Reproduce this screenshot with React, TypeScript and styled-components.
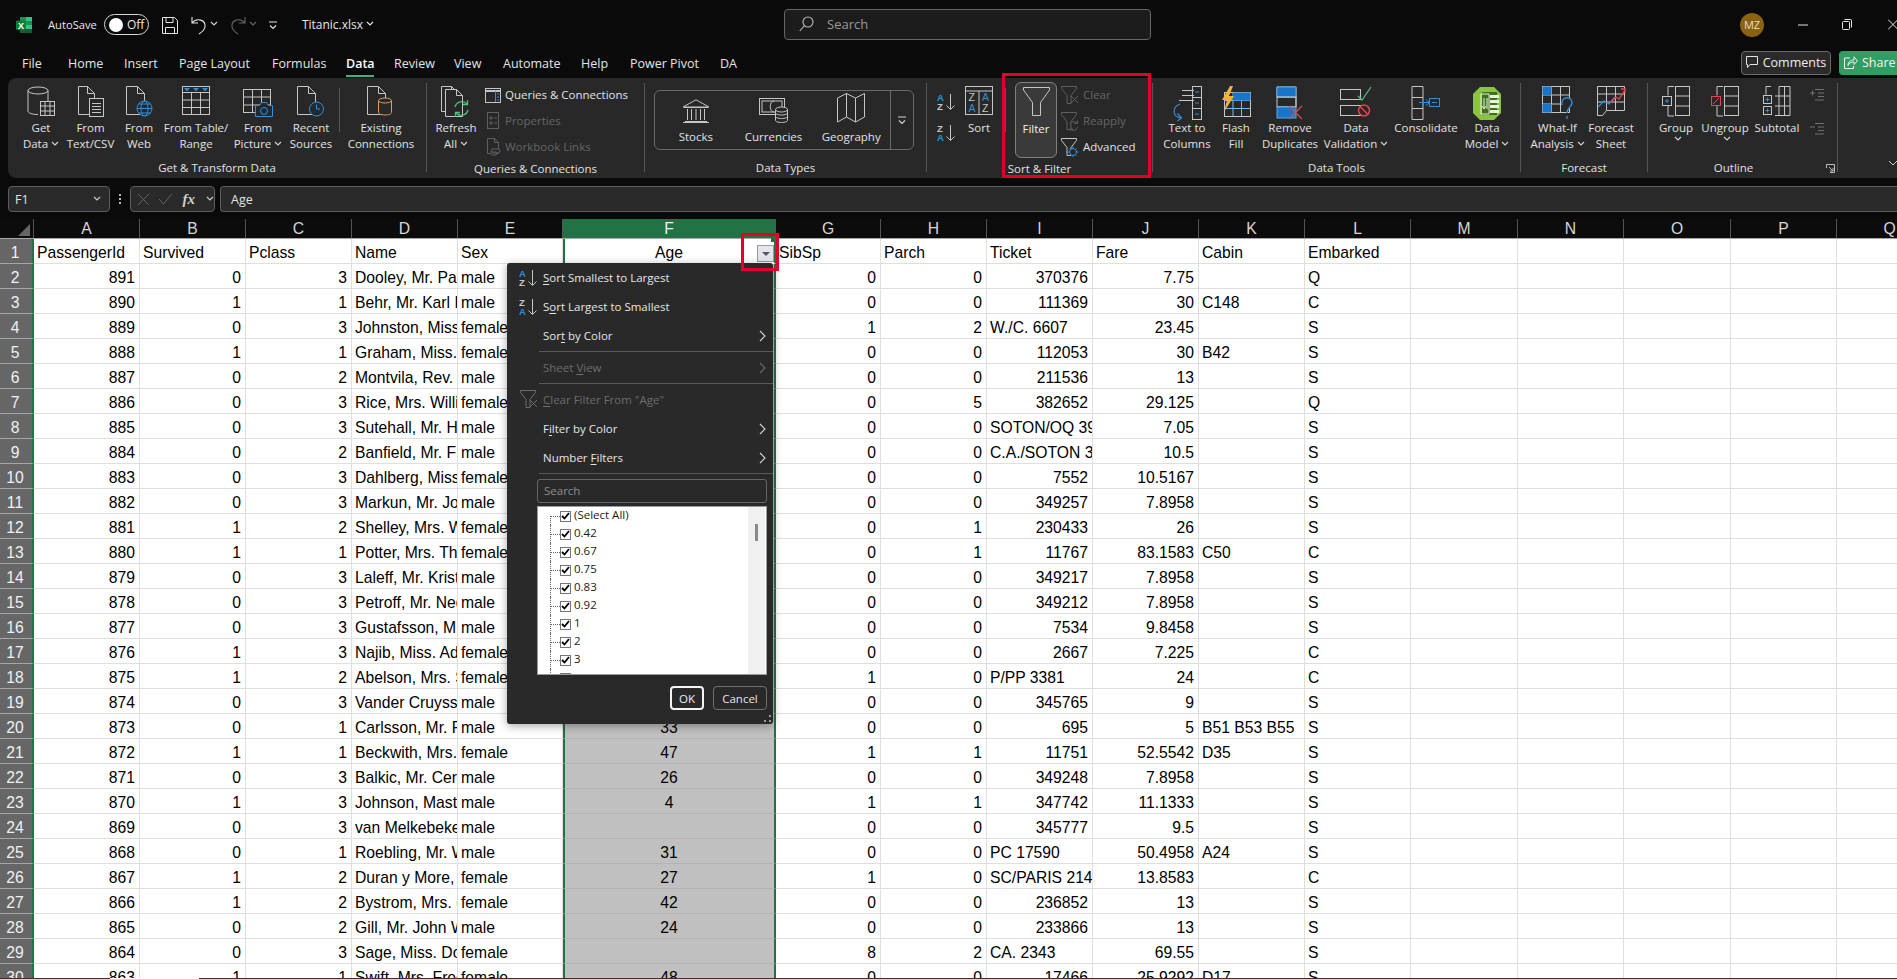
import React from "react";
import styled, { createGlobalStyle } from "styled-components";

const uiFont = `"Open Sans", "Noto Sans", sans-serif`;
const sheetFont = `"Liberation Sans", Arial, sans-serif`;
const LINE = "#c6c6c6";
const DIM = "#5f5f5f";
const BLUE = "#2f8fdf";
const PANEL = "#282828";

const GlobalStyle = createGlobalStyle`
    html, body {
        margin: 0;
        height: 979px;
        overflow: hidden;
        background: #0a0a0a;
    }
    * { box-sizing: border-box; }
`;

/* ---------- drawings ---------- */

function Ico({ w, h, stroke = LINE, children }: { w: number; h: number; stroke?: string; children?: React.ReactNode }) {
    return (
        <svg width={w} height={h} viewBox={`0 0 ${w} ${h}`} fill="none" stroke={stroke} strokeWidth="1" style={{ display: "block", flex: "none" }}>
            {children}
        </svg>
    );
}

const doc = (x: number, y: number, w: number, h: number, f = 7) =>
    `M${x} ${y}h${w - f}l${f} ${f}v${h - f}h${-w}z M${x + w - f} ${y}v${f}h${f}`;

const Chevron = ({ color = "#d0d0d0" }: { color?: string }) => (
    <svg width="8" height="5" viewBox="0 0 8 5" fill="none" stroke={color} strokeWidth="1.2" style={{ display: "inline-block", margin: "0 0 2px 3px" }}>
        <path d="M1 1l3 3 3-3" />
    </svg>
);

const GetDataIcon = () => (
    <Ico w={28} h={32}>
        <ellipse cx="11" cy="4.5" rx="10" ry="3.5" />
        <path d="M1 4.5V25c0 2 4 3.5 10 3.5M21 4.5V15" />
        <rect x="13.5" y="15.5" width="14" height="14" fill={PANEL} />
        <path d="M13.5 20h14M13.5 25h14M18 15.5v14M23 15.5v14" />
    </Ico>
);
const TextCsvIcon = () => (
    <Ico w={28} h={32}>
        <path d={doc(1.5, 0.5, 16, 28)} />
        <rect x="12.5" y="12.5" width="14" height="18" fill={PANEL} />
        <path d="M15 17.5h9M15 20.5h9M15 23.5h9M15 26.5h9" />
    </Ico>
);
const WebIcon = () => (
    <Ico w={28} h={32}>
        <path d={doc(1.5, 0.5, 18, 28)} />
        <g stroke={BLUE}>
            <circle cx="19.5" cy="22.5" r="7.5" fill={PANEL} />
            <ellipse cx="19.5" cy="22.5" rx="3.5" ry="7.5" />
            <path d="M12 22.5h15M13.5 18h12M13.5 27h12" />
        </g>
    </Ico>
);
const TableIcon = () => (
    <Ico w={28} h={30}>
        <rect x="0.5" y="0.5" width="27" height="28" />
        <path d="M.5 6.5h27M.5 14h27M.5 21.5h27M9.5 6.5v22M18.5 6.5v22" />
        <path d="M2 2h6l-3 3.5zM11 2h6l-3 3.5zM20 2h6l-3 3.5z" fill={BLUE} stroke="none" />
    </Ico>
);
const PictureIcon = () => (
    <Ico w={31} h={32}>
        <rect x="0.5" y="3.5" width="27" height="23" />
        <path d="M.5 11h27M.5 19h27M9.5 3.5v23M18.5 3.5v23" />
        <g stroke={BLUE}>
            <path d="M12.5 19.5h4l2-3h5l2 3h4v11h-17z" fill={PANEL} />
            <circle cx="21" cy="25" r="3.5" />
        </g>
    </Ico>
);
const RecentIcon = () => (
    <Ico w={28} h={32}>
        <path d={doc(0.5, 0.5, 18, 28)} />
        <g stroke={BLUE}>
            <circle cx="19.5" cy="23" r="7" fill={PANEL} />
            <path d="M19.5 18.5V23h3.5" />
        </g>
    </Ico>
);
const ExistingIcon = () => (
    <Ico w={28} h={32}>
        <path d={doc(0.5, 0.5, 18, 28)} />
        <g stroke="#e0a050">
            <path d="M11.5 14.5v12c0 1.5 3 2.5 6.5 2.5s6.5-1 6.5-2.5v-12" fill={PANEL} />
            <ellipse cx="18" cy="14.5" rx="6.5" ry="2.5" fill={PANEL} />
        </g>
    </Ico>
);
const RefreshIcon = () => (
    <Ico w={30} h={32}>
        <path d={doc(0.5, 0.5, 15, 25, 5)} />
        <path d={doc(4.5, 3.5, 17, 27, 6)} fill={PANEL} />
        <g stroke="#4cc27a" strokeWidth="1.3">
            <path d="M14 21a7 7 0 0 1 12-3" />
            <path d="M26.5 14v4.5H22" />
            <path d="M27 24a7 7 0 0 1-12 3" />
            <path d="M14.5 31v-4.5H19" />
        </g>
    </Ico>
);
const QueriesIcon = () => (
    <Ico w={16} h={15}>
        <rect x="0.5" y="0.5" width="15" height="14" />
        <path d="M.5 3h15" strokeWidth="2" />
        <path d="M10.5 3v11" stroke={BLUE} />
        <path d="M12 6h2M12 9h2M12 12h2" stroke={BLUE} />
    </Ico>
);
const PropertiesIcon = () => (
    <Ico w={16} h={18} stroke={DIM}>
        <rect x="2.5" y="0.5" width="11" height="16" />
        <path d="M5 5h2v2H5zM5 10h2v2H5zM9 6h3M9 11h3" />
    </Ico>
);
const LinksIcon = () => (
    <Ico w={16} h={18} stroke={DIM}>
        <path d={doc(2.5, 0.5, 11, 15, 4)} />
        <path d="M7 11h6a2 2 0 0 1 0 4H8a2 2 0 0 1 0-4M6 14h5a2 2 0 0 1 0 3H6" fill={PANEL} />
    </Ico>
);
const StocksIcon = () => (
    <Ico w={28} h={24}>
        <path d="M14 .8L1 8h26zM2 8.5h24M3 22.5h22M1 23.5h26M5.5 10v11M9.5 10v11M14 10v11M18.5 10v11M22.5 10v11" />
    </Ico>
);
const CurrencyIcon = () => (
    <Ico w={30} h={26}>
        <rect x="0.5" y="1.5" width="25" height="16" />
        <rect x="3" y="4" width="20" height="11" />
        <path d="M15 4c-5 0-5 11 0 11" />
        <g fill={PANEL}>
            <path d="M16.5 12.5v11c0 1 2.5 2 6 2s6-1 6-2v-11" />
            <ellipse cx="22.5" cy="12.5" rx="6" ry="2.5" />
            <path d="M16.5 16c0 1 2.5 2 6 2s6-1 6-2M16.5 19.5c0 1 2.5 2 6 2s6-1 6-2" fill="none" />
        </g>
    </Ico>
);
const MapIcon = () => (
    <Ico w={28} h={30}>
        <path d="M.5 5l9-4.5 9 4.5 9-4.5V24l-9 5-9-5-9 5zM9.5.5V24M18.5 5v24" />
    </Ico>
);
const AzIcon = ({ top, stroke = LINE }: { top: string; stroke?: string }) => {
    const blueFirst = top === "A";
    const letter = { fontFamily: sheetFont, fontSize: 9.5, fontWeight: 700, stroke: "none" } as const;
    return (
        <Ico w={19} h={18} stroke={stroke}>
            <text x="0" y="8" fill={blueFirst ? BLUE : stroke} style={letter}>{top}</text>
            <text x="0" y="17" fill={blueFirst ? stroke : BLUE} style={letter}>{top === "A" ? "Z" : "A"}</text>
            <path d="M13.5 1v15M9.5 12.5l4 4 4-4" />
        </Ico>
    );
};
const SortIcon = () => {
    const letter = { fontFamily: sheetFont, fontSize: 10.5, stroke: "none" } as const;
    return (
        <Ico w={29} h={30}>
            <rect x="0.5" y="0.5" width="27" height="28" />
            <path d="M.5 5h27M14 5v23.500" />
            <text x="3.500" y="15" fill={LINE} style={letter}>Z</text>
            <text x="3.500" y="26" fill={BLUE} style={letter}>A</text>
            <text x="17" y="15" fill={BLUE} style={letter}>A</text>
            <text x="17" y="26" fill={LINE} style={letter}>Z</text>
        </Ico>
    );
};
const FunnelIcon = () => (
    <Ico w={27} h={29}>
        <path d="M.5 .5h26v2.500L17.500 15.500V28.500h-8V15.500L.5 3z" />
    </Ico>
);
const SmallFunnel = ({ stroke, mark }: { stroke: string; mark: React.ReactNode }) => (
    <Ico w={18} h={19} stroke={stroke}>
        <path d="M.5 .5h15v2L10 9.500v8H6v-8L.5 2.500z" />
        {mark}
    </Ico>
);
const ClearMark = <path d="M10 10l7 7M17 10l-7 7" />;
const ReapplyMark = (
    <g fill={PANEL}>
        <path d="M9 13a4 4 0 0 1 7-2M16.500 8.500V11.500H13.500M16.500 15a4 4 0 0 1-7 2M9 19.500V17H12" />
    </g>
);
const GearMark = (
    <g stroke={BLUE} fill={PANEL}>
        <circle cx="12" cy="14" r="3.500" />
        <path d="M12 8.500v2M12 17.500v2M6.500 14h2M15.500 14h2M8.500 10.500l1.300 1.300M14.200 16.200l1.300 1.300M15.500 10.500l-1.300 1.300M9.800 16.200l-1.300 1.300" />
    </g>
);
const TextColumnsIcon = () => (
    <Ico w={30} h={36}>
        <path d="M10 4.500h12M10 9.500h12M7 14.500h15" />
        <rect x="20.500" y="0.500" width="9" height="33" />
        <path d="M20.500 11.500h9M20.500 22.500h9" />
        <path d="M23 6h4M23 17h4M23 28h4" stroke={BLUE} />
        <path d="M8 18c-8 3-8 13 1 14M5.500 27.500l4 4.500-4 3" stroke={BLUE} strokeWidth="1.200" />
    </Ico>
);
const FlashFillIcon = () => (
    <Ico w={30} h={32}>
        <rect x="3.500" y="6.500" width="26" height="24" />
        <path d="M3.500 14.500h26M3.500 22.500h26M12 6.500v24M20.500 6.500v24" stroke="#7fb7e8" />
        <path d="M12 6.500h17.500v8H12z" fill="#1a75c8" stroke="none" />
        <path d="M9 0L1 14h5L3 26l10-16H8l4-10z" fill="#f2b233" stroke="none" />
    </Ico>
);
const RemoveDupIcon = () => (
    <Ico w={28} h={34}>
        <path d="M1 11h19V1H1zM1 21h19v-10" />
        <rect x="1" y="1" width="19" height="10" fill="#1a75c8" stroke="#5aa9ea" />
        <rect x="1" y="11" width="19" height="10" fill="none" />
        <rect x="1" y="21" width="19" height="11" fill="#1a75c8" stroke="#5aa9ea" />
        <path d="M13 20l13 13M26 20L13 33" stroke="#e0484e" strokeWidth="1.200" />
    </Ico>
);
const ValidationIcon = () => (
    <Ico w={32} h={32}>
        <rect x="0.500" y="3.500" width="20" height="10" />
        <rect x="0.500" y="19.500" width="20" height="10" />
        <path d="M18 10l4 4 9-13" stroke="#4cc27a" strokeWidth="1.200" />
        <g stroke="#e0484e" strokeWidth="1.500">
            <circle cx="24" cy="24.500" r="5.500" fill={PANEL} />
            <path d="M20 20.500l8 8" />
        </g>
    </Ico>
);
const ConsolidateIcon = () => (
    <Ico w={30} h={34}>
        <path d="M1 .5h11v11H1zM1 11.500v11M12 11.500v11M1 22.500h11v11H1z" />
        <rect x="18.500" y="12.500" width="10" height="8" stroke={BLUE} fill={PANEL} />
        <path d="M21 16.500h5" stroke={BLUE} />
        <path d="M8 16.500h10M15 13.500l3.500 3-3.500 3" stroke={BLUE} />
    </Ico>
);
const DataModelIcon = () => (
    <svg width="30" height="35" viewBox="0 0 30 35" style={{ display: "block", flex: "none" }}>
        <path d="M8 1h14l7 7v19l-7 7H8l-7-7V8z" fill="#8bc53f" />
        <path d="M10 6h15v23H10z" fill="#3f6f22" />
        <path d="M9 8h8v20H9z" fill="none" stroke="#eaf5d8" />
        <path d="M18 9h9v3h-9zM18 14h9v3h-9zM18 19h9v3h-9zM18 24h9v3h-9z" fill="#eaf5d8" />
        <path d="M12 12v11M10 20l2 3 2-3M15 23V12" stroke="#eaf5d8" fill="none" />
    </svg>
);
const WhatIfIcon = () => (
    <Ico w={32} h={34}>
        <rect x="0.500" y="0.500" width="27" height="26" />
        <path d="M.5 9h27M.5 18h27M9.500 .5v26M18.500 .5v26" />
        <rect x="0.500" y="0.500" width="9" height="8.500" fill="#1a75c8" stroke="none" />
        <rect x="0.500" y="18" width="9" height="8.500" fill="#1a75c8" stroke="none" />
        <path d="M20 17c0-7 10-7 10 0 0 4-5 4-5 10" stroke={BLUE} strokeWidth="1.400" fill={PANEL} />
        <path d="M25 30v3" stroke={BLUE} strokeWidth="1.400" />
    </Ico>
);
const ForecastIcon = () => (
    <Ico w={29} h={30}>
        <path d="M.5 .5h27v24h-18l-4 5h-5zM.5 8h27M.5 16h27M9.500 .5v24M18.500 .5v24" />
        <path d="M1 21l6-6 5 3 6-7" stroke={BLUE} strokeWidth="1.300" />
        <path d="M14 16l5-5 3 2 6-9M24 3h4v4" stroke="#e0484e" strokeWidth="1.300" />
    </Ico>
);
const GroupIcon = () => (
    <Ico w={28} h={31}>
        <path d="M12 .5H6v9M6 20v10h6" />
        <rect x="13.500" y="0.500" width="14" height="29" />
        <path d="M13.500 10h14M13.500 20h14" />
        <rect x="0.500" y="10.500" width="9" height="9" fill={PANEL} />
        <path d="M3 15h4M5 13v4" stroke={BLUE} />
    </Ico>
);
const UngroupIcon = () => (
    <Ico w={28} h={31}>
        <path d="M12 .5H6v9M6 20v10h6" />
        <rect x="13.500" y="0.500" width="14" height="29" />
        <path d="M13.500 10h14M13.500 20h14" />
        <rect x="0.500" y="10.500" width="9" height="9" fill={PANEL} stroke="#e0484e" />
        <path d="M2 18l6-6" stroke="#e0484e" />
    </Ico>
);
const SubtotalIcon = () => (
    <Ico w={28} h={31}>
        <path d="M8 .5H3v8M16 .5h11v29H12M12 10h15M12 20h15M16 .5v29M21.500 .5v29" />
        <rect x="0.500" y="9.500" width="8" height="8" fill={PANEL} />
        <rect x="0.500" y="20.500" width="8" height="8" fill={PANEL} />
        <path d="M2.500 13.500h4M4.500 11.500v4M2.500 24.500h4M4.500 22.500v4" stroke={BLUE} />
    </Ico>
);
const OutlineSmall = ({ plus }: { plus: boolean }) => (
    <Ico w={16} h={14} stroke="#707070">
        <path d="M6 1.500h9M9 5h6M9 8.500h6M6 12h9" />
        <path d={plus ? "M1 5h5M3.500 2.500v5" : "M1 5h5"} />
    </Ico>
);
const ExcelLogo = () => (
    <svg width="16" height="16" viewBox="0 0 16 16" style={{ display: "block", flex: "none" }}>
        <path d="M4 0h12v16H4z" fill="#1d8f55" />
        <path d="M10 0h6v4h-6zM10 8h6v4h-6z" fill="#33c481" />
        <path d="M4 12h12v4H4z" fill="#185c37" />
        <rect x="0" y="3.500" width="9.500" height="9.500" rx="1" fill="#107c41" />
        <text x="2" y="11.500" fill="#fff" style={{ fontFamily: sheetFont, fontSize: 9, fontWeight: 700 }}>X</text>
    </svg>
);

/* ---------- title bar ---------- */

const TitleBar = styled.header`
    display: grid;
    grid-template-columns: 784px 367px 1fr;
    align-items: center;
    height: 49px;
    font: 12px ${uiFont};
    color: #e6e6e6;
`;
const TitleLeft = styled.div`
    display: flex;
    align-items: center;
    padding-left: 16px;
`;
const AutoSave = styled.span`
    margin: 0 7px 0 16px;
    font-size: 11.200px;
`;
const Toggle = styled.span`
    display: flex;
    align-items: center;
    width: 45px;
    height: 21px;
    border: 1px solid #d8d8d8;
    border-radius: 11px;
    padding-left: 4px;
    gap: 4px;
    font-size: 12px;
    &::before {
        content: "";
        width: 14px;
        height: 14px;
        border-radius: 50%;
        background: #fff;
    }
`;
const QatSlot = styled.span<{ $ml: number }>`
    display: flex;
    align-items: center;
    margin-left: ${(p) => p.$ml}px;
`;
const FileName = styled.span`
    margin-left: 25px;
    font-size: 12px;
`;
const SearchBox = styled.div`
    display: flex;
    align-items: center;
    gap: 13px;
    height: 31px;
    margin-top: -1px;
    padding-left: 14px;
    border: 1px solid #666;
    border-radius: 4px;
    background: #1c1c1c;
    color: #9a9a9a;
    font-size: 13px;
`;
const TitleRight = styled.div`
    display: flex;
    align-items: center;
    padding-left: 589px;
`;
const Avatar = styled.span`
    display: flex;
    align-items: center;
    justify-content: center;
    width: 24px;
    height: 24px;
    border-radius: 50%;
    background: #8a6210;
    color: #e8dcc0;
    font-size: 11px;
`;
const WinButton = styled.span<{ $ml: number }>`
    display: flex;
    margin-left: ${(p) => p.$ml}px;
`;

/* ---------- tabs ---------- */

const TabRow = styled.nav`
    display: flex;
    align-items: center;
    height: 29px;
    padding-left: 22px;
    font: 12.500px ${uiFont};
    color: #e4e4e4;
`;
const Tab = styled.span<{ $w: number; $active?: boolean }>`
    position: relative;
    width: ${(p) => p.$w}px;
    flex: none;
    font-weight: ${(p) => (p.$active ? 600 : 400)};
    color: ${(p) => (p.$active ? "#fff" : "#e4e4e4")};
    ${(p) =>
        p.$active &&
        `&::after {
            content: "";
            position: absolute;
            left: 0;
            top: 20px;
            width: 28px;
            height: 2px;
            background: #3fb27f;
        }`}
`;
const TabActions = styled.div`
    display: flex;
    gap: 8px;
    margin-left: auto;
    height: 24px;
    margin-bottom: 2px;
`;
const CommentsButton = styled.span`
    display: flex;
    align-items: center;
    justify-content: center;
    gap: 5px;
    width: 90px;
    border: 1px solid #6a6a6a;
    border-radius: 4px;
    background: #2a2a2a;
    color: #eee;
`;
const ShareButton = styled.span`
    display: flex;
    align-items: center;
    gap: 4px;
    width: 58px;
    padding-left: 5px;
    border-radius: 4px 0 0 4px;
    background: #2f9e63;
    color: #f4f4f4;
    white-space: nowrap;
    overflow: hidden;
`;

/* ---------- ribbon ---------- */

const Ribbon = styled.section`
    display: flex;
    height: 100px;
    margin-left: 8px;
    background: ${PANEL};
    border-radius: 8px 0 0 8px;
    font: 11.500px/16px ${uiFont};
    color: #e2e2e2;
`;
const GroupBox = styled.div<{ $w: number }>`
    display: flex;
    flex-direction: column;
    flex: none;
    width: ${(p) => p.$w}px;
`;
const GroupBody = styled.div<{ $pl?: number }>`
    display: flex;
    flex: 1;
    padding-left: ${(p) => p.$pl ?? 0}px;
`;
const GroupLabel = styled.div<{ $pr?: number }>`
    position: relative;
    display: flex;
    align-items: center;
    justify-content: center;
    height: 20px;
    padding-right: ${(p) => p.$pr ?? 0}px;
    text-align: center;
`;
const GroupSep = styled.div`
    flex: none;
    width: 1px;
    margin: 5px 0 6px;
    background: #555;
`;
const InnerSep = styled.div`
    flex: none;
    width: 1px;
    height: 44px;
    margin: 10px 4px 0;
    background: #555;
`;
const BigButton = styled.div<{ $w: number }>`
    display: flex;
    flex-direction: column;
    align-items: center;
    flex: none;
    width: ${(p) => p.$w}px;
    padding-top: 8px;
    text-align: center;
    white-space: nowrap;
`;
const IconSlot = styled.div`
    display: flex;
    justify-content: center;
    align-items: flex-start;
    height: 34px;
`;
const SmallColumn = styled.div<{ $ml: number }>`
    display: flex;
    flex-direction: column;
    padding-top: 4px;
    margin-left: ${(p) => p.$ml}px;
`;
const SmallRow = styled.div<{ $off?: boolean }>`
    display: flex;
    align-items: center;
    gap: 4px;
    height: 26px;
    white-space: nowrap;
    color: ${(p) => (p.$off ? "#666" : "#e2e2e2")};
`;
const TypesBox = styled.div`
    display: flex;
    width: 260px;
    height: 60px;
    margin: 12px 0 0 9px;
    padding-left: 2px;
    border: 1px solid #6a6a6a;
    border-radius: 6px;
`;
const TypeItem = styled.div`
    display: flex;
    flex-direction: column;
    align-items: center;
    justify-content: flex-end;
    width: 78px;
    padding-bottom: 4px;
    gap: 6px;
`;
const TypesMore = styled.div`
    display: flex;
    align-items: center;
    justify-content: center;
    width: 23px;
    margin-left: auto;
    border-left: 1px solid #6a6a6a;
`;
const SortColumn = styled.div`
    display: flex;
    flex-direction: column;
    gap: 13px;
    margin: 15px 1px 0 10px;
`;
const FilterButton = styled.div`
    display: flex;
    flex-direction: column;
    align-items: center;
    width: 42px;
    height: 76px;
    margin: 4px 0 0 5px;
    padding-top: 4px;
    border: 1px solid #808080;
    border-radius: 6px;
    background: #3a3a3a;
    color: #f2f2f2;
`;
const OutlineColumn = styled.div`
    display: flex;
    flex-direction: column;
    gap: 20px;
    margin: 10px 0 0 8px;
`;
const Launcher = styled.svg`
    position: absolute;
    right: 2px;
    top: 6px;
`;
const RibbonCollapse = styled.div`
    flex: 1;
    display: flex;
    align-items: flex-end;
    justify-content: flex-end;
    padding-bottom: 11px;
`;

/* ---------- formula bar ---------- */

const FormulaRow = styled.div`
    display: flex;
    align-items: stretch;
    height: 26px;
    margin: 8px 0 7px 8px;
    font: 12.500px ${uiFont};
    color: #e2e2e2;
`;
const NameBox = styled.div`
    display: flex;
    align-items: center;
    justify-content: space-between;
    width: 102px;
    padding: 0 8px 0 6px;
    border: 1px solid #5c5c5c;
    border-radius: 4px;
    background: #2a2a2a;
`;
const DotsGrip = styled.div`
    width: 20px;
    display: flex;
    flex-direction: column;
    align-items: center;
    justify-content: center;
    gap: 2px;
    & > i {
        width: 2px;
        height: 2px;
        background: #bbb;
    }
`;
const FormulaButtons = styled.div`
    display: flex;
    align-items: center;
    gap: 8px;
    width: 85px;
    padding-left: 6px;
    border: 1px solid #5c5c5c;
    border-radius: 4px;
    background: #2a2a2a;
`;
const FxMark = styled.span`
    margin-left: 2px;
    font: italic 700 15px "Liberation Serif", serif;
    color: #cfcfcf;
`;
const FormulaInput = styled.div`
    display: flex;
    align-items: center;
    flex: 1;
    margin-left: 5px;
    padding-left: 10px;
    border: 1px solid #5c5c5c;
    border-right: 0;
    border-radius: 4px 0 0 4px;
    background: #2a2a2a;
`;

/* ---------- sheet ---------- */

const COLS = "34px 106px 106px 106px 106px 105px 213px 105px 106px 106px 106px 106px 106px 107px 106px 107px 106px 106px";

const Sheet = styled.div`
    position: relative;
    height: 759px;
    overflow: hidden;
    background: #fff;
    font: 15.700px ${sheetFont};
    color: #000;
`;
const HeaderRow = styled.div`
    display: grid;
    grid-template-columns: ${COLS};
    height: 20px;
    background: #0c0c0c;
    border-bottom: 1px solid #a8a8a8;
    color: #d6d6d6;
`;
const Corner = styled.div`
    position: relative;
    border-right: 1px solid #555;
    &::after {
        content: "";
        position: absolute;
        right: 3px;
        bottom: 2px;
        border-left: 12px solid transparent;
        border-bottom: 12px solid #666;
    }
`;
const ColHead = styled.div<{ $on?: boolean }>`
    display: flex;
    align-items: center;
    justify-content: center;
    overflow: hidden;
    background: ${(p) => (p.$on ? "#217346" : "transparent")};
    color: ${(p) => (p.$on ? "#f0f0f0" : "#d6d6d6")};
    border-right: 1px solid #555;
`;
const DataRow = styled.div`
    display: grid;
    grid-template-columns: ${COLS};
    height: 25px;
`;
const RowHead = styled.div`
    display: flex;
    align-items: center;
    justify-content: center;
    padding: 3px 2px 0 0;
    background: #666;
    color: #f0f0f0;
    border-right: 2px solid #217346;
    border-bottom: 1px solid #a6a6a6;
`;
const Cell = styled.div<{ $right?: boolean; $center?: boolean; $clip?: boolean }>`
    display: flex;
    align-items: center;
    justify-content: ${(p) => (p.$center ? "center" : p.$right ? "flex-end" : "flex-start")};
    padding: 4px ${(p) => (p.$clip ? 0 : 4)}px 0 3px;
    overflow: hidden;
    white-space: nowrap;
    border-right: 1px solid #dfdfdf;
    border-bottom: 1px solid #dfdfdf;
`;
const AgeCell = styled(Cell)<{ $first?: boolean }>`
    position: relative;
    overflow: visible;
    background: ${(p) => (p.$first ? "#fff" : "#c0c0c0")};
    border-left: 2px solid #217346;
    border-right: 2px solid #217346;
    border-bottom-color: ${(p) => (p.$first ? "#fff" : "#b2b2b2")};
`;
const FilterArrow = styled.span`
    position: absolute;
    right: 0;
    top: 6px;
    display: flex;
    align-items: center;
    justify-content: center;
    width: 17px;
    height: 17px;
    border: 1px solid #9a9a9a;
    background: #e3e6ec;
    &::after {
        content: "";
        border-left: 4px solid transparent;
        border-right: 4px solid transparent;
        border-top: 4px solid #555;
    }
`;
const FillHandle = styled.span`
    position: absolute;
    right: -2px;
    top: -2px;
    width: 5px;
    height: 5px;
    background: #217346;
`;
const BottomEdge = styled.div`
    height: 1px;
    background: linear-gradient(to right, #333 0 110px, #fff 110px 199px, #333 199px);
`;

/* ---------- filter menu ---------- */

const FilterMenu = styled.div`
    position: absolute;
    left: 507px;
    top: 44px;
    width: 266px;
    height: 461px;
    padding-top: 1px;
    background: #292929;
    border-radius: 3px;
    box-shadow: 0 2px 10px rgba(0, 0, 0, 0.35);
    font: 11.500px ${uiFont};
    color: #e6e6e6;
    u { text-underline-offset: 2px; }
`;
const MenuItem = styled.div<{ $off?: boolean }>`
    display: flex;
    align-items: center;
    height: 29px;
    padding-bottom: 2px;
    color: ${(p) => (p.$off ? "#6c6c6c" : "#e6e6e6")};
`;
const MenuIcon = styled.span`
    display: flex;
    justify-content: center;
    width: 36px;
    padding-left: 7px;
    flex: none;
`;
const MenuArrow = styled.svg`
    margin-left: auto;
    margin-right: 7px;
`;
const MenuSep = styled.div`
    height: 1px;
    margin: 0 0 2px 32px;
    background: #5a5a5a;
`;
const MenuSearch = styled.div`
    display: flex;
    align-items: center;
    height: 24px;
    margin: 5px 6px 0 30px;
    padding: 0 0 2px 6px;
    border: 1px solid #666;
    border-radius: 3px;
    color: #8f8f8f;
`;
const ValueList = styled.div`
    display: flex;
    height: 169px;
    margin: 3px 6px 0 30px;
    border: 1px solid #9a9a9a;
    background: #fff;
    color: #1a1a1a;
    overflow: hidden;
`;
const ValueRows = styled.div`
    flex: 1;
    padding-left: 12px;
`;
const ValueRow = styled.div`
    display: flex;
    align-items: center;
    height: 18px;
    line-height: 16px;
`;
const ValueText = styled.span`
    margin-top: -2px;
`;
const Tee = styled.span<{ $first?: boolean }>`
    position: relative;
    align-self: stretch;
    width: 10px;
    flex: none;
    &::before {
        content: "";
        position: absolute;
        left: 0;
        top: ${(p) => (p.$first ? "50%" : "0")};
        bottom: 0;
        border-left: 1px dotted #666;
    }
    &::after {
        content: "";
        position: absolute;
        left: 0;
        right: 0;
        top: 50%;
        border-top: 1px dotted #666;
    }
`;
const CheckBox = styled.span`
    display: flex;
    align-items: center;
    justify-content: center;
    width: 11px;
    height: 11px;
    margin-right: 3px;
    border: 1px solid #777;
    flex: none;
`;
const ListTrack = styled.div`
    width: 17px;
    margin-right: 1px;
    padding: 17px 0 0 7px;
    background: #f0f0f0;
    &::after {
        content: "";
        display: block;
        width: 2.500px;
        height: 17px;
        background: #8a8a8a;
    }
`;
const MenuActions = styled.div`
    display: flex;
    justify-content: flex-end;
    gap: 9px;
    margin: 11px 6px 0 0;
`;
const OkButton = styled.span`
    display: flex;
    align-items: center;
    justify-content: center;
    width: 34px;
    height: 24px;
    border: 2px solid #f4f4f4;
    border-radius: 4px;
    color: #f0f0f0;
`;
const CancelButton = styled.span`
    display: flex;
    align-items: center;
    justify-content: center;
    width: 54px;
    height: 24px;
    border: 1px solid #707070;
    border-radius: 4px;
`;
const Grip = styled.svg`
    position: absolute;
    right: 1px;
    bottom: 1px;
`;
const Callout = styled.div<{ $l: number; $t: number; $w: number; $h: number }>`
    position: absolute;
    left: ${(p) => p.$l}px;
    top: ${(p) => p.$t}px;
    width: ${(p) => p.$w}px;
    height: ${(p) => p.$h}px;
    border: 3px solid #e0002a;
    pointer-events: none;
`;
const Page = styled.div`
    position: relative;
    width: 1897px;
    height: 979px;
    overflow: hidden;
    background: #0a0a0a;
`;

/* ---------- data ---------- */

const tabs: [string, number][] = [
    ["File", 46], ["Home", 56], ["Insert", 55], ["Page Layout", 93], ["Formulas", 74], ["Data", 48],
    ["Review", 60], ["View", 49], ["Automate", 78], ["Help", 49], ["Power Pivot", 90], ["DA", 40],
];
const columns = "A B C D E F G H I J K L M N O P Q".split(" ");

type Row = [number, number, number, string, string, string, number, number, string, string, string, string];
const rows: Row[] = [
    [891, 0, 3, "Dooley, Mr. Patrick", "male", "", 0, 0, "370376", "7.75", "", "Q"],
    [890, 1, 1, "Behr, Mr. Karl Howell", "male", "", 0, 0, "111369", "30", "C148", "C"],
    [889, 0, 3, 'Johnston, Miss. Catherine', "female", "", 1, 2, "W./C. 6607", "23.45", "", "S"],
    [888, 1, 1, "Graham, Miss. Margaret", "female", "", 0, 0, "112053", "30", "B42", "S"],
    [887, 0, 2, "Montvila, Rev. Juozas", "male", "", 0, 0, "211536", "13", "", "S"],
    [886, 0, 3, "Rice, Mrs. William", "female", "", 0, 5, "382652", "29.125", "", "Q"],
    [885, 0, 3, "Sutehall, Mr. Henry Jr", "male", "", 0, 0, "SOTON/OQ 392076", "7.05", "", "S"],
    [884, 0, 2, "Banfield, Mr. Frederick", "male", "", 0, 0, "C.A./SOTON 34068", "10.5", "", "S"],
    [883, 0, 3, "Dahlberg, Miss. Gerda", "female", "", 0, 0, "7552", "10.5167", "", "S"],
    [882, 0, 3, "Markun, Mr. Johann", "male", "", 0, 0, "349257", "7.8958", "", "S"],
    [881, 1, 2, "Shelley, Mrs. William", "female", "", 0, 1, "230433", "26", "", "S"],
    [880, 1, 1, "Potter, Mrs. Thomas Jr", "female", "", 0, 1, "11767", "83.1583", "C50", "C"],
    [879, 0, 3, "Laleff, Mr. Kristo", "male", "", 0, 0, "349217", "7.8958", "", "S"],
    [878, 0, 3, "Petroff, Mr. Nedelio", "male", "", 0, 0, "349212", "7.8958", "", "S"],
    [877, 0, 3, "Gustafsson, Mr. Alfred", "male", "", 0, 0, "7534", "9.8458", "", "S"],
    [876, 1, 3, "Najib, Miss. Adele", "female", "", 0, 0, "2667", "7.225", "", "C"],
    [875, 1, 2, "Abelson, Mrs. Samuel", "female", "", 1, 0, "P/PP 3381", "24", "", "C"],
    [874, 0, 3, "Vander Cruyssen, Mr.", "male", "", 0, 0, "345765", "9", "", "S"],
    [873, 0, 1, "Carlsson, Mr. Frans", "male", "33", 0, 0, "695", "5", "B51 B53 B55", "S"],
    [872, 1, 1, "Beckwith, Mrs. Richard", "female", "47", 1, 1, "11751", "52.5542", "D35", "S"],
    [871, 0, 3, "Balkic, Mr. Cerin", "male", "26", 0, 0, "349248", "7.8958", "", "S"],
    [870, 1, 3, "Johnson, Master. Harold", "male", "4", 1, 1, "347742", "11.1333", "", "S"],
    [869, 0, 3, "van Melkebeke, Mr.", "male", "", 0, 0, "345777", "9.5", "", "S"],
    [868, 0, 1, "Roebling, Mr. Washington", "male", "31", 0, 0, "PC 17590", "50.4958", "A24", "S"],
    [867, 1, 2, "Duran y More, Miss.", "female", "27", 1, 0, "SC/PARIS 2149", "13.8583", "", "C"],
    [866, 1, 2, "Bystrom, Mrs. (Karolina)", "female", "42", 0, 0, "236852", "13", "", "S"],
    [865, 0, 2, "Gill, Mr. John William", "male", "24", 0, 0, "233866", "13", "", "S"],
    [864, 0, 3, "Sage, Miss. Dorothy", "female", "", 8, 2, "CA. 2343", "69.55", "", "S"],
    [863, 1, 1, "Swift, Mrs. Frederick", "female", "48", 0, 0, "17466", "25.9292", "D17", "S"],
];
const filterValues = ["(Select All)", "0.42", "0.67", "0.75", "0.83", "0.92", "1", "2", "3", ""];
const isNumeric = (s: string) => /^[\d.]+$/.test(s);

const ChevronRight = ({ color }: { color: string }) => (
    <MenuArrow width="7" height="12" viewBox="0 0 7 12" fill="none" stroke={color} strokeWidth="1.100">
        <path d="M1 1l5 5-5 5" />
    </MenuArrow>
);

function Big({ w, icon, lines, caret, caretLine }: { w: number; icon: React.ReactNode; lines: string[]; caret?: boolean; caretLine?: boolean }) {
    return (
        <BigButton $w={w}>
            <IconSlot>{icon}</IconSlot>
            {lines.map((line, i) => (
                <div key={i}>
                    {line}
                    {caret && i === lines.length - 1 && <Chevron />}
                </div>
            ))}
            {caretLine && <Chevron />}
        </BigButton>
    );
}

function Group({ w, label, pl, pr, extra, children }: { w: number; label: React.ReactNode; pl?: number; pr?: number; extra?: React.ReactNode; children: React.ReactNode }) {
    return (
        <GroupBox $w={w}>
            <GroupBody $pl={pl}>{children}</GroupBody>
            <GroupLabel $pr={pr}>{label}{extra}</GroupLabel>
        </GroupBox>
    );
}

function RibbonBar() {
    return (
        <Ribbon>
            <Group w={418} pl={8} label="Get & Transform Data">
                <Big w={50} icon={<GetDataIcon />} lines={["Get", "Data"]} caret />
                <Big w={49} icon={<TextCsvIcon />} lines={["From", "Text/CSV"]} />
                <Big w={48} icon={<WebIcon />} lines={["From", "Web"]} />
                <Big w={66} icon={<TableIcon />} lines={["From Table/", "Range"]} />
                <Big w={58} icon={<PictureIcon />} lines={["From", "Picture"]} caret />
                <Big w={48} icon={<RecentIcon />} lines={["Recent", "Sources"]} />
                <InnerSep />
                <Big w={74} icon={<ExistingIcon />} lines={["Existing", "Connections"]} />
            </Group>
            <GroupSep />
            <Group w={217} pl={7} label="Queries & Connections">
                <Big w={44} icon={<RefreshIcon />} lines={["Refresh", "All"]} caret />
                <SmallColumn $ml={7}>
                    <SmallRow><QueriesIcon /> Queries &amp; Connections</SmallRow>
                    <SmallRow $off><PropertiesIcon /> Properties</SmallRow>
                    <SmallRow $off><LinksIcon /> Workbook Links</SmallRow>
                </SmallColumn>
            </Group>
            <GroupSep />
            <Group w={281} label="Data Types">
                <TypesBox>
                    <TypeItem><StocksIcon />Stocks</TypeItem>
                    <TypeItem><CurrencyIcon />Currencies</TypeItem>
                    <TypeItem><MapIcon />Geography</TypeItem>
                    <TypesMore>
                        <svg width="8" height="9" viewBox="0 0 8 9" fill="none" stroke="#d0d0d0" strokeWidth="1.200">
                            <path d="M0 1h8M1 4.500l3 3 3-3" />
                        </svg>
                    </TypesMore>
                </TypesBox>
            </Group>
            <GroupSep />
            <Group w={225} label="Sort & Filter">
                <SortColumn>
                    <AzIcon top="A" />
                    <AzIcon top="Z" />
                </SortColumn>
                <Big w={44} icon={<SortIcon />} lines={["Sort"]} />
                <InnerSep />
                <FilterButton>
                    <IconSlot><FunnelIcon /></IconSlot>
                    <div>Filter</div>
                </FilterButton>
                <SmallColumn $ml={4}>
                    <SmallRow $off><SmallFunnel stroke={DIM} mark={ClearMark} /> Clear</SmallRow>
                    <SmallRow $off><SmallFunnel stroke={DIM} mark={ReapplyMark} /> Reapply</SmallRow>
                    <SmallRow><SmallFunnel stroke={LINE} mark={GearMark} /> Advanced</SmallRow>
                </SmallColumn>
            </Group>
            <GroupSep />
            <Group w={367} pl={4} label="Data Tools">
                <Big w={60} icon={<TextColumnsIcon />} lines={["Text to", "Columns"]} />
                <Big w={38} icon={<FlashFillIcon />} lines={["Flash", "Fill"]} />
                <Big w={70} icon={<RemoveDupIcon />} lines={["Remove", "Duplicates"]} />
                <Big w={62} icon={<ValidationIcon />} lines={["Data", "Validation"]} caret />
                <Big w={78} icon={<ConsolidateIcon />} lines={["Consolidate"]} />
                <Big w={44} icon={<DataModelIcon />} lines={["Data", "Model"]} caret />
            </Group>
            <GroupSep />
            <Group w={126} pl={9} label="Forecast">
                <Big w={55} icon={<WhatIfIcon />} lines={["What-If", "Analysis"]} caret />
                <Big w={52} icon={<ForecastIcon />} lines={["Forecast", "Sheet"]} />
            </Group>
            <GroupSep />
            <Group
                w={189}
                pl={7}
                pr={18}
                label="Outline"
                extra={
                    <Launcher width="9" height="9" viewBox="0 0 9 9" fill="none" stroke="#bdbdbd">
                        <path d="M.5 4V.5H8.500V8.500H4M3 3l4 4M7 4v3H4" />
                    </Launcher>
                }
            >
                <Big w={42} icon={<GroupIcon />} lines={["Group"]} caretLine />
                <Big w={56} icon={<UngroupIcon />} lines={["Ungroup"]} caretLine />
                <Big w={48} icon={<SubtotalIcon />} lines={["Subtotal"]} />
                <OutlineColumn>
                    <OutlineSmall plus />
                    <OutlineSmall plus={false} />
                </OutlineColumn>
            </Group>
            <GroupSep />
            <RibbonCollapse>
                <svg width="8" height="6" viewBox="0 0 8 6" fill="none" stroke="#d0d0d0">
                    <path d="M0 0l4 4 4-4" />
                </svg>
            </RibbonCollapse>
        </Ribbon>
    );
}

function AgeFilterMenu() {
    return (
        <FilterMenu>
            <MenuItem><MenuIcon><AzIcon top="A" /></MenuIcon><span><u>S</u>ort Smallest to Largest</span></MenuItem>
            <MenuItem><MenuIcon><AzIcon top="Z" /></MenuIcon><span>S<u>o</u>rt Largest to Smallest</span></MenuItem>
            <MenuItem><MenuIcon /><span>Sor<u>t</u> by Color</span><ChevronRight color="#d8d8d8" /></MenuItem>
            <MenuSep />
            <MenuItem $off><MenuIcon /><span>Sheet <u>V</u>iew</span><ChevronRight color="#6c6c6c" /></MenuItem>
            <MenuSep />
            <MenuItem $off><MenuIcon><SmallFunnel stroke="#6c6c6c" mark={ClearMark} /></MenuIcon><span><u>C</u>lear Filter From "Age"</span></MenuItem>
            <MenuItem><MenuIcon /><span>F<u>i</u>lter by Color</span><ChevronRight color="#d8d8d8" /></MenuItem>
            <MenuItem><MenuIcon /><span>Number <u>F</u>ilters</span><ChevronRight color="#d8d8d8" /></MenuItem>
            <MenuSep />
            <MenuSearch>Search</MenuSearch>
            <ValueList>
                <ValueRows>
                    {filterValues.map((value, i) => (
                        <ValueRow key={i}>
                            <Tee $first={i === 0} />
                            <CheckBox>
                                <svg width="9" height="8" viewBox="0 0 9 8" fill="none" stroke="#000" strokeWidth="1.800">
                                    <path d="M1 4l2.500 2.500L8 1" />
                                </svg>
                            </CheckBox>
                            <ValueText>{value}</ValueText>
                        </ValueRow>
                    ))}
                </ValueRows>
                <ListTrack />
            </ValueList>
            <MenuActions>
                <OkButton>OK</OkButton>
                <CancelButton>Cancel</CancelButton>
            </MenuActions>
            <Grip width="8" height="8" viewBox="0 0 8 8" fill="#9a9a9a">
                <path d="M5 0h2v2H5zM5 5h2v2H5zM0 5h2v2H0z" />
            </Grip>
        </FilterMenu>
    );
}

export default function App() {
    return (
        <Page>
            <GlobalStyle />
            <TitleBar>
                <TitleLeft>
                    <ExcelLogo />
                    <AutoSave>AutoSave</AutoSave>
                    <Toggle>Off</Toggle>
                    <QatSlot $ml={13}>
                        <Ico w={16} h={18} stroke="#e4e4e4">
                            <path d="M.5 1.500h12l3 3v13H.5zM4 1.500v5h7v-5M3.500 17.500v-6h9v6" />
                        </Ico>
                    </QatSlot>
                    <QatSlot $ml={13}>
                        <Ico w={16} h={20} stroke="#e4e4e4">
                            <path d="M1 2v6h6M1 8c5-6 14-3 13 4-.5 3-3 5-6 7" strokeWidth="1.100" />
                        </Ico>
                        <Chevron />
                    </QatSlot>
                    <QatSlot $ml={12}>
                        <Ico w={16} h={20} stroke="#666">
                            <path d="M15 2v6H9M15 8C10 2 1 5 2 12c.5 3 3 5 6 7" strokeWidth="1.100" />
                        </Ico>
                        <Chevron color="#666" />
                    </QatSlot>
                    <QatSlot $ml={12}>
                        <svg width="8" height="8" viewBox="0 0 8 8" fill="none" stroke="#e4e4e4" strokeWidth="1.100">
                            <path d="M0 1h8M1 4.500l3 3 3-3" />
                        </svg>
                    </QatSlot>
                    <FileName>Titanic.xlsx</FileName>
                    <Chevron color="#e4e4e4" />
                </TitleLeft>
                <SearchBox>
                    <svg width="15" height="16" viewBox="0 0 15 16" fill="none" stroke="#bbb" strokeWidth="1.100">
                        <circle cx="9" cy="6" r="5" />
                        <path d="M5.500 9.500L.8 15" />
                    </svg>
                    Search
                </SearchBox>
                <TitleRight>
                    <Avatar>MZ</Avatar>
                    <WinButton $ml={34}>
                        <svg width="10" height="2" viewBox="0 0 10 2" stroke="#e4e4e4"><path d="M0 1h10" /></svg>
                    </WinButton>
                    <WinButton $ml={34}>
                        <svg width="10" height="11" viewBox="0 0 10 11" fill="none" stroke="#e4e4e4">
                            <rect x="0.500" y="2.500" width="7" height="8" rx="1" />
                            <path d="M2.500 .5h6a1 1 0 0 1 1 1v7" />
                        </svg>
                    </WinButton>
                    <WinButton $ml={36}>
                        <svg width="10" height="11" viewBox="0 0 10 11" stroke="#e4e4e4"><path d="M0 .5l10 10M10 .5L0 10.500" /></svg>
                    </WinButton>
                </TitleRight>
            </TitleBar>
            <TabRow>
                {tabs.map(([label, w]) => (
                    <Tab key={label} $w={w} $active={label === "Data"}>{label}</Tab>
                ))}
                <TabActions>
                    <CommentsButton>
                        <svg width="12" height="13" viewBox="0 0 12 13" fill="none" stroke="#e4e4e4">
                            <path d="M.5 .5h11v8H4l-2.500 3v-3h-1z" />
                        </svg>
                        Comments
                    </CommentsButton>
                    <ShareButton>
                        <svg width="14" height="13" viewBox="0 0 14 13" fill="none" stroke="#f4f4f4">
                            <path d="M10 4V.8L13.500 5 10 8.500V6C7 6 5 7 4 9.500 4 6 6 4 10 4zM6 2H.5v10.500h9V10" />
                        </svg>
                        Share
                    </ShareButton>
                </TabActions>
            </TabRow>
            <RibbonBar />
            <FormulaRow>
                <NameBox>F1<Chevron color="#c8c8c8" /></NameBox>
                <DotsGrip><i /><i /><i /></DotsGrip>
                <FormulaButtons>
                    <svg width="13" height="13" viewBox="0 0 13 13" stroke="#666"><path d="M1 1l11 11M12 1L1 12" /></svg>
                    <svg width="15" height="12" viewBox="0 0 15 12" fill="none" stroke="#666"><path d="M1 6l4.500 5L14 1" /></svg>
                    <FxMark>fx</FxMark>
                    <Chevron color="#c8c8c8" />
                </FormulaButtons>
                <FormulaInput>Age</FormulaInput>
            </FormulaRow>
            <Sheet>
                <HeaderRow>
                    <Corner />
                    {columns.map((c) => (
                        <ColHead key={c} $on={c === "F"}>{c}</ColHead>
                    ))}
                </HeaderRow>
                <DataRow>
                    <RowHead>1</RowHead>
                    {["PassengerId", "Survived", "Pclass", "Name", "Sex"].map((t) => <Cell key={t}>{t}</Cell>)}
                    <AgeCell $center $first>
                        Age
                        <FilterArrow />
                        <FillHandle />
                    </AgeCell>
                    {["SibSp", "Parch", "Ticket", "Fare", "Cabin", "Embarked", "", "", "", "", ""].map((t, i) => <Cell key={i}>{t}</Cell>)}
                </DataRow>
                {rows.map((r, i) => (
                    <DataRow key={r[0]}>
                        <RowHead>{i + 2}</RowHead>
                        <Cell $right>{r[0]}</Cell>
                        <Cell $right>{r[1]}</Cell>
                        <Cell $right>{r[2]}</Cell>
                        <Cell $clip>{r[3]}</Cell>
                        <Cell $clip>{r[4]}</Cell>
                        <AgeCell $center>{r[5]}</AgeCell>
                        <Cell $right>{r[6]}</Cell>
                        <Cell $right>{r[7]}</Cell>
                        <Cell $right={isNumeric(r[8])} $clip={!isNumeric(r[8])}>{r[8]}</Cell>
                        <Cell $right>{r[9]}</Cell>
                        <Cell>{r[10]}</Cell>
                        <Cell>{r[11]}</Cell>
                        <Cell /><Cell /><Cell /><Cell /><Cell />
                    </DataRow>
                ))}
                <AgeFilterMenu />
            </Sheet>
            <BottomEdge />
            <Callout $l={1002} $t={73} $w={149} $h={105} />
            <Callout $l={741} $t={233} $w={38} $h={38} />
        </Page>
    );
}
